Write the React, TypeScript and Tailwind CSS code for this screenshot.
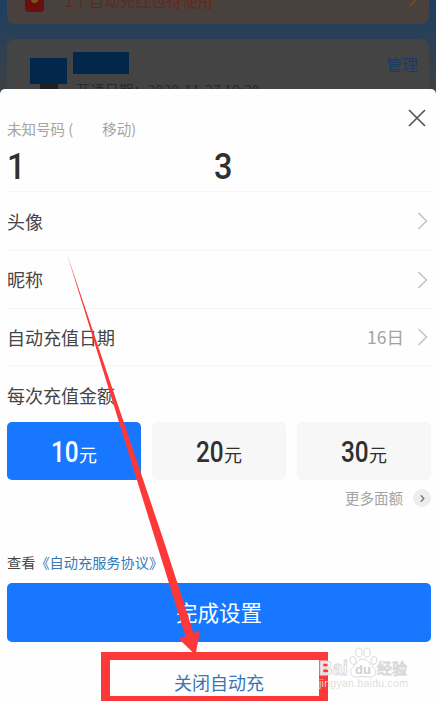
import { ChevronRight } from "lucide-react"

const settingRows = [
  { label: "头像", value: "", height: "h-[59px]" },
  { label: "昵称", value: "", height: "h-[58px]" },
  { label: "自动充值日期", value: "16日", height: "h-[57px]" },
]

const amounts = [
  { value: "10", selected: true },
  { value: "20", selected: false },
  { value: "30", selected: false },
]

function RowArrow() {
  return (
    <svg width="11" height="18" viewBox="0 0 11 18" fill="none" className="shrink-0">
      <path d="M1.5 1 L9.5 9 L1.5 17" stroke="#c3c3c3" strokeWidth="1.5" />
    </svg>
  )
}

function AccountBackdrop() {
  return (
    <div className="h-[89px] overflow-hidden bg-linear-to-b from-[#1d3f62] via-[#2c4055] to-[#3d4042] px-[7px]">
      {/* Red packet notice */}
      <div className="flex h-6 items-start rounded-b-lg bg-[#48413e] pl-[18px] pr-[12px]">
        <div className="flex h-3 w-[19px] shrink-0 justify-center rounded-b-sm bg-[#69100f]">
          <span className="-mt-1 h-[7px] w-[7px] rounded-full bg-[#7d541f]" />
        </div>
        <span className="-mt-[10px] ml-[21px] text-[15.5px] leading-[20px] text-[#672719]">1个自动充红包待使用</span>
        <svg width="8" height="14" viewBox="0 0 8 14" fill="none" className="-mt-[7px] ml-auto">
          <path d="M1 1 L6.5 7 L1 13" stroke="#705018" strokeWidth="1.8" />
        </svg>
      </div>

      {/* Account card */}
      <div className="mt-[15px] flex h-[60px] rounded-t-lg bg-[#444444] pl-[23px] pr-[11px]">
        <div className="mt-[19px] w-[37px] shrink-0">
          <div className="h-[26px] bg-[#02274b]" />
          <div className="mx-auto h-[10px] w-[18px] bg-[#202020]" />
        </div>
        <div className="ml-[6px] mt-[13px]">
          <div className="h-[22px] w-[56px] bg-[#02274b]" />
          <div className="ml-[3px] mt-[6px] whitespace-nowrap text-[14.3px] leading-[20px] text-[#292929]">
            开通日期：2020-11-27 19:20
          </div>
        </div>
        <span className="ml-auto mt-[14px] text-[16px] leading-[22px] text-[#193b69]">管理</span>
      </div>
    </div>
  )
}

function Watermark() {
  return (
    <div className="absolute left-[318px] top-[645px] w-[94px]">
      <svg width="94" height="48" viewBox="0 0 94 48" className="font-['Liberation_Sans','Noto_Sans_CJK_SC',sans-serif]">
        <g fill="#fff" fillOpacity="0.9" stroke="#d6d6d6" strokeWidth="0.9">
          <text x="1" y="30" fontSize="20" fontWeight="bold" textLength="29" lengthAdjust="spacingAndGlyphs">
            Bai
          </text>
          <ellipse cx="35" cy="15.5" rx="3" ry="4" transform="rotate(-15 35 15.5)" />
          <ellipse cx="41" cy="7.5" rx="3.2" ry="4.5" />
          <ellipse cx="49" cy="7.5" rx="3.2" ry="4.5" />
          <ellipse cx="56" cy="15.5" rx="3" ry="4" transform="rotate(15 56 15.5)" />
          <path d="M45 14 C40 14 39 19 35 22 C30 26 33 33 39 32 Q45 31 51 32 C58 33 60 26 55 22 C51 19 50 14 45 14 Z" />
          <text x="59" y="29" fontSize="15">
            经验
          </text>
        </g>
        <text x="45" y="29" textAnchor="middle" fill="#d0d0d0" fontSize="13" fontWeight="bold">
          du
        </text>
        <text x="1" y="42" fill="#dedede" fontSize="10.5" textLength="89">
          jingyan.baidu.com
        </text>
      </svg>
    </div>
  )
}

export default function App() {
  return (
    <div className="relative h-[701px] w-[436px] overflow-hidden bg-[#404244] font-['Noto_Sans_CJK_SC',sans-serif] text-[#454545]">
      <AccountBackdrop />

      <main className="h-[612px] rounded-t-[5px] bg-[#fefefe] pl-[7px] pr-[5px]">
        {/* Phone number */}
        <header className="h-[103px] border-b border-[#f5f5f5]">
          <div className="flex h-[50px] justify-between">
            <div className="mt-[30px] flex h-5 items-center text-[14.5px] text-[#a4a4a4]">
              <span>未知号码 (</span>
              <span className="ml-[29px]">移动)</span>
            </div>
            <svg width="18" height="18" viewBox="0 0 18 18" className="mr-[5px] mt-[20px]">
              <path d="M1 1 L17 17 M17 1 L1 17" stroke="#555" strokeWidth="1.7" />
            </svg>
          </div>
          <div className="flex h-[54px] items-center gap-[190px] pt-px font-['Roboto'] text-[36px] font-medium leading-none text-[#303030]">
            <span className="w-[17px] origin-left scale-x-90">1</span>
            <span className="origin-left scale-x-90">3</span>
          </div>
        </header>

        {settingRows.map((row) => (
          <div
            key={row.label}
            className={`flex items-center border-b border-[#f5f5f5] pr-[3px] text-[18px] ${row.height}`}
          >
            <span>{row.label}</span>
            <span className="ml-auto mr-[13px] text-[17.5px] text-[#a2a2a2]">{row.value}</span>
            <RowArrow />
          </div>
        ))}

        {/* Amount */}
        <div className="flex h-[56px] items-center pt-[3px] text-[18px]">每次充值金额</div>
        <div className="flex justify-between">
          {amounts.map((amount) => (
            <div
              key={amount.value}
              className={`flex h-[58px] w-[134px] items-center justify-center rounded-[5px] ${
                amount.selected ? "bg-[#1777ff] text-white" : "bg-[#f7f7f7] text-[#303030]"
              }`}
            >
              <span className="flex items-baseline pt-[3px]">
                <span className="w-[28px] origin-left scale-x-[.84] font-['Roboto'] text-[29px] font-medium">
                  {amount.value}
                </span>
                <span className="text-[18px]">元</span>
              </span>
            </div>
          ))}
        </div>
        <div className="flex h-[36px] items-center justify-end text-[14.5px] text-[#a4a4a4]">
          <span>更多面额</span>
          <span className="ml-[10px] flex h-[18px] w-[18px] items-center justify-center rounded-full bg-[#ededed]">
            <ChevronRight className="h-[11px] w-[11px] text-[#777]" strokeWidth={3} />
          </span>
        </div>

        <div className="mt-[37px] flex h-[20px] items-center whitespace-nowrap text-[14.2px]">
          <span>查看</span>
          <span className="text-[#347ab7]">《自动充服务协议》</span>
        </div>
        <button className="mt-[10px] flex h-[59px] w-[424px] items-center justify-center rounded-[5px] bg-[#1777ff] text-[21.5px] text-white">
          完成设置
        </button>
        <div className="flex h-[58px] items-end justify-center pb-[5px] text-[18px] leading-[26px] text-[#3777b6]">
          关闭自动充
        </div>
      </main>

      {/* Annotation over the close link */}
      <div className="absolute left-[101px] top-[652px] h-[49px] w-[227px] border-x-[9px] border-b-[5px] border-t-[8px] border-[#fc3838]" />
      <svg className="absolute left-0 top-0" width="436" height="701" viewBox="0 0 436 701">
        <path d="M67 254 L163.5 540 L193.5 633 L200 631 L195.5 655 L179 639 L185.5 636 L155.5 540 Z" fill="#fc3838" />
      </svg>
      <Watermark />
    </div>
  )
}
